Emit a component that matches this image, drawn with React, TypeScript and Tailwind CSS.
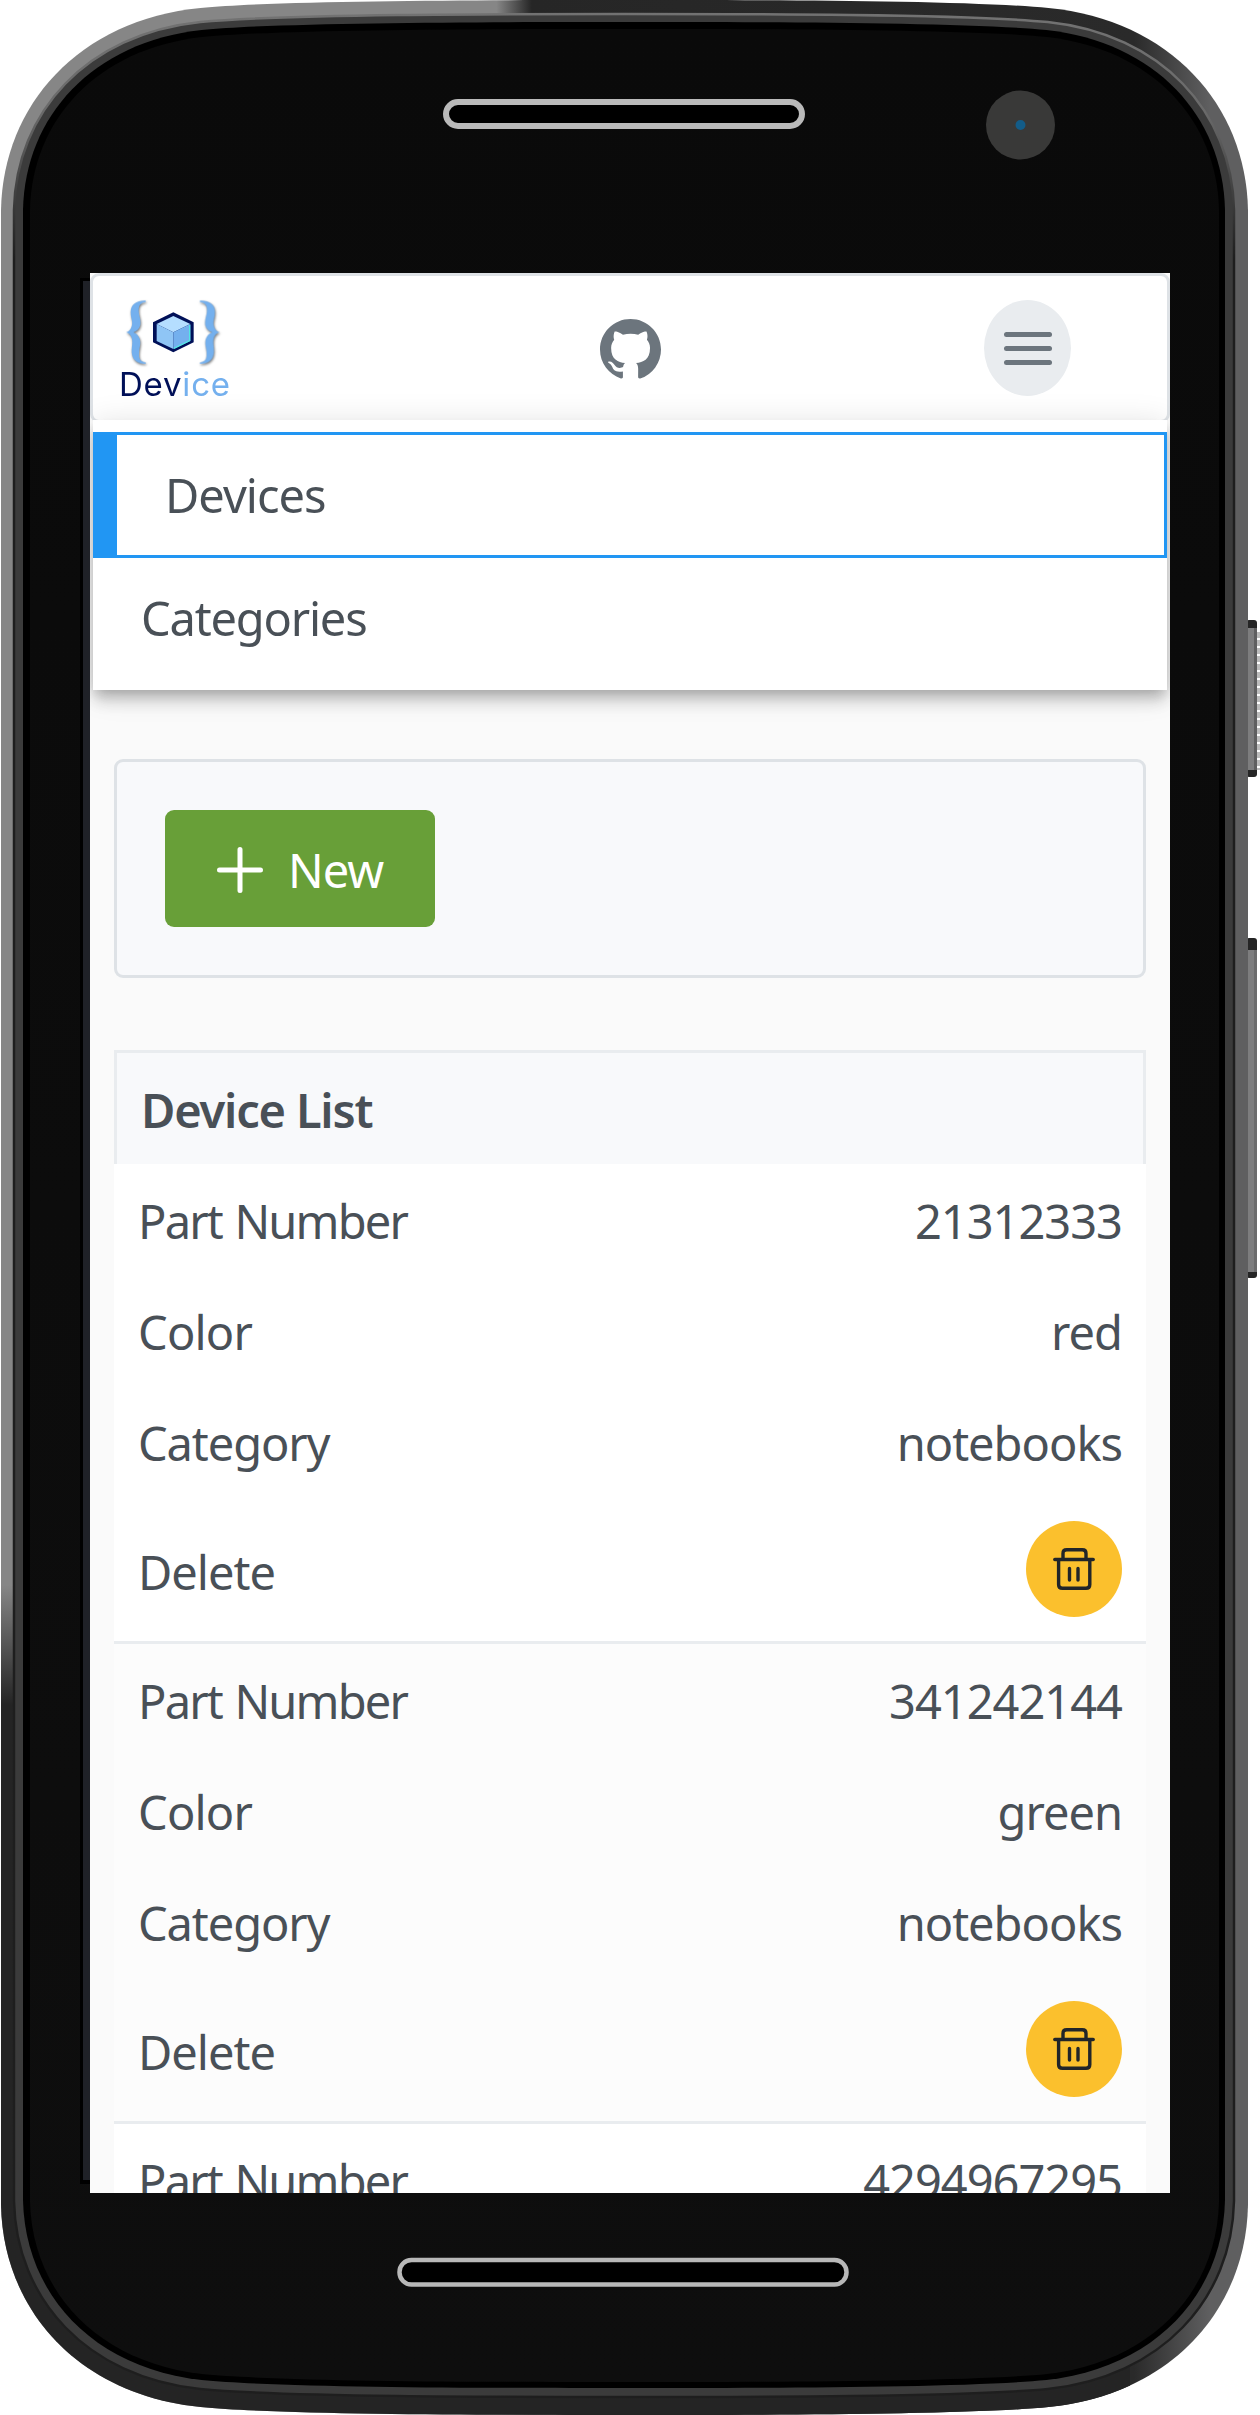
import React from "react";

// Outline of one layer of the handset; h is the height that each corner takes up.
function frame(l: number, t: number, r: number, b: number, h: number) {
  const cy = h * 0.5;
  const cx = h * 0.37;
  const ex = h * 0.95;
  const m = (l + r) / 2;
  return [
    `M${l} ${t + h}`,
    `C${l + 2} ${t + cy} ${l + cx} ${t + 20} ${l + ex} ${t + 8}`,
    `C${l + ex + 82} ${t} ${m - 120} ${t} ${m} ${t}`,
    `C${m + 120} ${t} ${r - ex - 82} ${t} ${r - ex} ${t + 8}`,
    `C${r - cx} ${t + 20} ${r - 2} ${t + cy} ${r} ${t + h}`,
    `V${b - h}`,
    `C${r - 2} ${b - cy} ${r - cx} ${b - 20} ${r - ex} ${b - 8}`,
    `C${r - ex - 82} ${b} ${m + 120} ${b} ${m} ${b}`,
    `C${m - 120} ${b} ${l + ex + 82} ${b} ${l + ex} ${b - 8}`,
    `C${l + cx} ${b - 20} ${l + 2} ${b - cy} ${l} ${b - h}`,
    "Z",
  ].join("");
}

const OUTER = frame(1, 0, 1248, 2415, 210);
const RIM = frame(14, 14, 1234, 2397, 196);
const EDGE = frame(23, 22, 1225, 2388, 188);
const GLASS = frame(30, 29, 1219, 2382, 181);

function PhoneBody() {
  return (
    <svg className="absolute inset-0" width="1260" height="2415" viewBox="0 0 1260 2415" aria-hidden="true">
      <defs>
        <linearGradient id="metal" x1="0" x2="1260" y1="0" y2="0" gradientUnits="userSpaceOnUse">
          <stop offset="0" stopColor="#868686" />
          <stop offset="0.394" stopColor="#868686" />
          <stop offset="0.422" stopColor="#262626" />
          <stop offset="0.9" stopColor="#2a2a2a" />
          <stop offset="0.96" stopColor="#5f5f60" />
          <stop offset="1" stopColor="#5f5f60" />
        </linearGradient>
        <linearGradient id="lowShade" x1="0" x2="0" y1="1585" y2="1705" gradientUnits="userSpaceOnUse">
          <stop offset="0" stopColor="#242424" stopOpacity="0" />
          <stop offset="1" stopColor="#242424" />
        </linearGradient>
        <linearGradient id="rimLine" x1="0" x2="0" y1="12" y2="260" gradientUnits="userSpaceOnUse">
          <stop offset="0" stopColor="#727272" />
          <stop offset="0.4" stopColor="#6a6a6a" />
          <stop offset="1" stopColor="#1e1e1e" />
        </linearGradient>
        <linearGradient id="glass" x1="0" x2="0" y1="0" y2="1">
          <stop offset="0" stopColor="#0a0a0a" />
          <stop offset="1" stopColor="#0e0e0e" />
        </linearGradient>
        <clipPath id="lowerLeft">
          <rect x="0" y="1500" width="1130" height="915" />
        </clipPath>
      </defs>
      {/* side keys */}
      <g>
        <rect x="1246" y="620" width="11" height="157" rx="3" fill="#252525" />
        <rect x="1246" y="628" width="11" height="142" fill="#7d7d7e" />
        <rect x="1254" y="628" width="3" height="142" fill="#5f5f60" />
        <path d="M1258.5 632V770" stroke="#bdbdbd" strokeWidth="3" strokeDasharray="6 2" />
        <rect x="1246" y="938" width="11" height="340" rx="3" fill="#252525" />
        <rect x="1246" y="950" width="11" height="322" fill="#7d7d7e" />
        <rect x="1254" y="950" width="3" height="322" fill="#6b6b6c" />
      </g>
      <path d={OUTER} fill="url(#metal)" />
      <path d={OUTER} fill="url(#lowShade)" clipPath="url(#lowerLeft)" />
      <path d={RIM} fill="#3b3b3b" />
      <path d={RIM} fill="none" stroke="url(#rimLine)" strokeWidth="2.5" />
      <path d={EDGE} fill="#000" />
      <path d={GLASS} fill="url(#glass)" />
      <rect x="80" y="278" width="12" height="1906" fill="#000" />
      <rect x="83" y="281" width="8" height="1899" fill="#1f2127" />
      <rect x="446" y="102" width="356" height="24" rx="12" fill="#000" stroke="#bababa" strokeWidth="6" />
      <rect x="399.5" y="2260" width="447" height="24.5" rx="12" fill="#000" stroke="#b8b8b8" strokeWidth="4.5" />
      <circle cx="1020.5" cy="125" r="34.5" fill="#393938" />
      <circle cx="1020.5" cy="125" r="5" fill="#135c88" />
    </svg>
  );
}

const BRACE =
  "M437 901C410 900 392 912 392 936C392 954 400 964 395 978C392 988 386 994 378 996C386 998 394 1004 396 1016C399 1030 393 1044 396 1062C399 1081 416 1091 437 1091V1086C421 1084 417 1076 417 1062C417 1044 423 1034 420 1018C417 1006 409 999 400 996C410 992 418 986 421 974C424 958 416 946 416 930C416 914 422 906 437 905Z";

function Logo() {
  return (
    <div className="-mt-[3px] flex w-[120px] flex-col">
      <svg width="110" height="72" viewBox="360 890 330 216" aria-hidden="true">
        <g className="drop-shadow-[2px_4px_3px_rgba(0,0,0,0.55)]">
          <path d={BRACE} fill="#74b0ee" />
          <path d={BRACE} fill="#74b0ee" transform="translate(1037 0) scale(-1 1)" />
        </g>
        <path d="M520 936L581 966V1026L520 1056L459 1026V966Z" fill="#001058" />
        <path d="M520 947L571 971L520 996L470 971Z" fill="#b5deff" />
        <path d="M470 971L520 996V1046L470 1022Z" fill="#8fc5f5" />
        <path d="M571 971V1022L520 1046V996Z" fill="#74b0ee" />
        <path d="M569 974V1021L522 1044" fill="none" stroke="#54e8e4" strokeWidth="4" />
      </svg>
      <div className="-mt-[5px] -ml-px font-['Inter'] text-[33px] leading-[40px] font-normal tracking-[0.8px] text-[#001058]">
        Dev<span className="text-[#74b0ee]">ice</span>
      </div>
    </div>
  );
}

function GithubMark() {
  return (
    <svg width="61" height="60" viewBox="0 0 16 15.7" fill="#6c757d" aria-hidden="true">
      <path d="M8 0C3.58 0 0 3.58 0 8c0 3.54 2.29 6.53 5.47 7.59.4.07.55-.17.55-.38 0-.19-.01-.82-.01-1.49-2.01.37-2.53-.49-2.69-.94-.09-.23-.48-.94-.82-1.13-.28-.15-.68-.52-.01-.53.63-.01 1.08.58 1.23.82.72 1.21 1.87.87 2.33.66.07-.52.28-.87.51-1.07-1.78-.2-3.64-.89-3.64-3.95 0-.87.31-1.59.82-2.15-.08-.2-.36-1.02.08-2.12 0 0 .67-.21 2.2.82.64-.18 1.32-.27 2-.27s1.36.09 2 .27c1.53-1.04 2.2-.82 2.2-.82.44 1.1.16 1.92.08 2.12.51.56.82 1.27.82 2.15 0 3.07-1.87 3.75-3.65 3.95.29.25.54.73.54 1.48 0 1.07-.01 1.93-.01 2.2 0 .21.15.46.55.38A8.01 8.01 0 0 0 16 8c0-4.42-3.58-8-8-8" />
    </svg>
  );
}

function TrashButton() {
  return (
    <button className="mb-px flex size-24 items-center justify-center rounded-full bg-[#fbc02d]" aria-label="Delete device">
      <svg width="42" height="42" viewBox="0 0 42 42" fill="none" stroke="#212529" strokeWidth="3.4" strokeLinecap="round" aria-hidden="true">
        <path d="M1.8 11.5H40.2" />
        <path d="M10 11V5.500Q10 1.800 13.700 1.800H29.300Q33 1.800 33 5.500V11" />
        <path d="M5.600 12V36.500Q5.600 40.300 9.400 40.300H33Q36.800 40.300 36.800 36.500V12" />
        <path d="M16.500 20.500V32M25 20.500V32" />
      </svg>
    </button>
  );
}

function TopBar() {
  return (
    <header className="relative h-[150px] rounded-[9px] border-[3px] border-[#dee2e6] bg-white">
      <div className="flex h-full items-center">
        <div className="ml-[27px] h-[96px] w-[480px]">
          <Logo />
        </div>
        <div className="w-[384px] pt-0.5">
          <GithubMark />
        </div>
        <button className="flex h-[96px] w-[87px] flex-col items-center justify-center gap-[9px] rounded-[50%] bg-[#e9ecef]" aria-label="Menu">
          <span className="h-[5px] w-12 rounded-full bg-[#6c757d]" />
          <span className="h-[5px] w-12 rounded-full bg-[#6c757d]" />
          <span className="h-[5px] w-12 rounded-full bg-[#6c757d]" />
        </button>
      </div>
      <nav className="absolute top-[144px] left-0 z-10 flex h-[270px] w-full flex-col bg-white pt-3 shadow-[0_6px_12px_-3px_rgba(0,0,0,0.2),0_12px_15px_0_rgba(0,0,0,0.14),0_3px_30px_0_rgba(0,0,0,0.12)]">
        <a className="flex h-[126px] items-center border-[3px] border-l-[24px] border-[#2196f3] pl-[48px] tracking-[-1px]">Devices</a>
        <a className="flex h-[120px] items-center pl-[48px] tracking-[-1.2px]">Categories</a>
      </nav>
    </header>
  );
}

type Device = { part: string; color?: string; category?: string; shade?: boolean };

const devices: Device[] = [
  { part: "21312333", color: "red", category: "notebooks" },
  { part: "341242144", color: "green", category: "notebooks", shade: true },
  { part: "4294967295" },
];

function DeviceCard({ part, color, category, shade }: Device) {
  return (
    <li className={`flex h-[480px] shrink-0 flex-col border-b-[3px] border-[#e9ecef] px-6 pt-px ${shade ? "bg-[#fcfcfc]" : "bg-white"}`}>
      <div className="flex h-[111px] items-center justify-between">
        <span className="tracking-[-1.8px] [word-spacing:2px]">Part Number</span>
        <span>{part}</span>
      </div>
      {color && category && (
        <>
          <div className="flex h-[111px] items-center justify-between">
            <span className="tracking-[-0.8px]">Color</span>
            <span>{color}</span>
          </div>
          <div className="flex h-[111px] items-center justify-between">
            <span className="tracking-[-1.1px]">Category</span>
            <span>{category}</span>
          </div>
          <div className="flex grow items-center justify-between">
            <span className="pt-[5px]">Delete</span>
            <TrashButton />
          </div>
        </>
      )}
    </li>
  );
}

export default function App() {
  return (
    <div className="relative h-[2415px] w-[1260px] overflow-hidden bg-white pt-[273px] pl-[90px]">
      <PhoneBody />
      <main className="relative h-[1920px] w-[1080px] overflow-hidden bg-[#fafafa] font-['Noto_Sans',sans-serif] text-[47px] leading-[64px] tracking-[-1px] text-[#495057]">
        <TopBar />
        <div className="mt-[336px] flex flex-col gap-[72px] px-6">
          <section className="flex h-[219px] items-center rounded-[9px] border-[3px] border-[#dee2e6] bg-[#f8f9fb] px-12">
            <button className="flex h-[117px] w-[270px] items-center rounded-[9px] bg-[#689f38] pl-[52px] text-white">
              <svg className="mt-[3px]" width="46" height="46" viewBox="0 0 46 46" stroke="#fff" strokeWidth="5" strokeLinecap="round" aria-hidden="true">
                <path d="M23 2.500V43.500M2.500 23H43.500" />
              </svg>
              <span className="ml-[25px] pt-[3px]">New</span>
            </button>
          </section>
          <section>
            <h2 className="flex h-[114px] items-center border-[3px] border-b-0 border-[#e9ecef] bg-[#f8f9fb] px-6 pt-[3px] font-semibold tracking-[-1.2px]">Device List</h2>
            <ul>
              {devices.map((d) => (
                <DeviceCard key={d.part} {...d} />
              ))}
            </ul>
          </section>
        </div>
      </main>
    </div>
  );
}
